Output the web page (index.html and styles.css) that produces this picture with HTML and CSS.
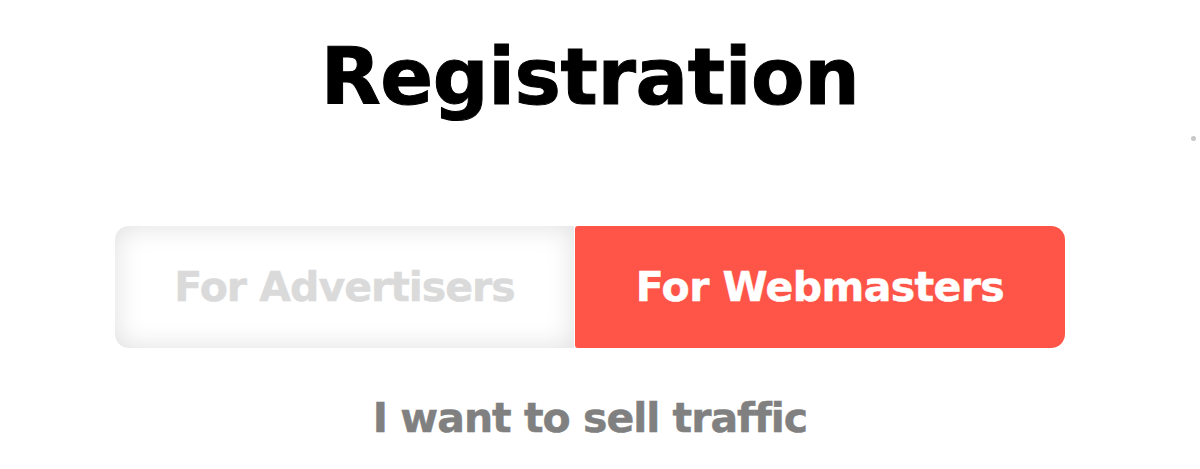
FILE: index.html
```html
<!DOCTYPE html>
<html lang="en">
<head>
<meta charset="utf-8">
<title>Registration</title>
<link rel="stylesheet" href="styles.css">
</head>
<body>
<div class="page">
  <main class="content">
    <h1 class="title">Registration</h1>
    <div class="switch">
      <button class="tab tab-off">For Advertisers</button>
      <button class="tab tab-on">For Webmasters</button>
    </div>
    <p class="subtitle">I want to sell traffic</p>
  </main>
  <aside class="rail"><span class="dot"></span></aside>
</div>
</body>
</html>
```

FILE: styles.css
```css
html, body {
  margin: 0;
  padding: 0;
  background: #ffffff;
}
body {
  font-family: "DejaVu Sans", "Liberation Sans", sans-serif;
  font-weight: 700;
  width: 1200px;
  height: 469px;
  overflow: hidden;
}
.page {
  display: flex;
  width: 1200px;
}
.content {
  width: 1180px;
  display: flex;
  flex-direction: column;
  align-items: center;
}
.rail {
  width: 20px;
  padding-top: 136px;
  box-sizing: border-box;
}
.dot {
  display: block;
  width: 5px;
  height: 5px;
  margin-left: 11px;
  border-radius: 50%;
  background: #c8c8c8;
}
.title {
  margin: 38px 0 0 0;
  font-size: 78px;
  line-height: 78px;
  font-weight: 700;
  color: #000000;
  letter-spacing: -0.4px;
  -webkit-text-stroke: 1px #000000;
}
.switch {
  margin-top: 110px;
  display: grid;
  grid-template-columns: 459px 490px;
  column-gap: 1px;
  height: 122px;
}
.tab {
  border: 0;
  margin: 0;
  padding: 0;
  font-family: inherit;
  font-weight: 700;
  font-size: 41px;
  display: flex;
  align-items: center;
  justify-content: center;
  cursor: pointer;
  -webkit-text-stroke: 0.5px currentColor;
}
.tab-off {
  background: #ffffff;
  color: #dadada;
  letter-spacing: -1px;
  border-radius: 14px 0 0 14px;
  box-shadow: inset 0 0 28px rgba(0, 0, 0, 0.13);
}
.tab-on {
  background: #ff5548;
  color: #ffffff;
  letter-spacing: -0.6px;
  border-radius: 3px 14px 14px 3px;
}
.subtitle {
  margin: 50px 0 0 0;
  font-size: 41px;
  line-height: 41px;
  color: #808080;
  letter-spacing: -1px;
  -webkit-text-stroke: 0.5px #808080;
}
```
